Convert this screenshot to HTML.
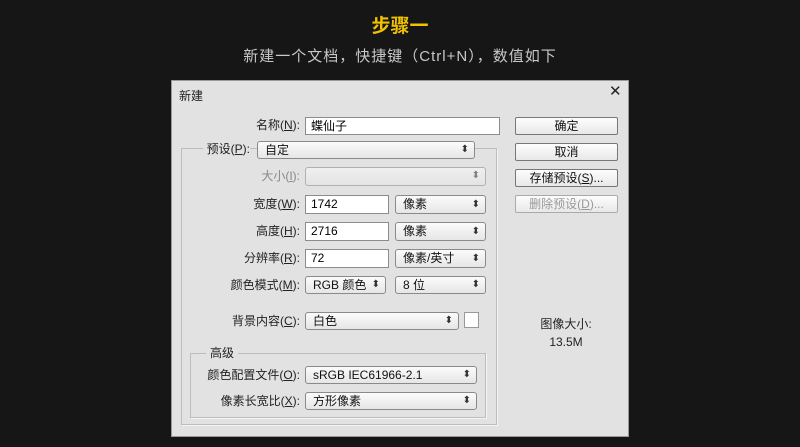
<!DOCTYPE html>
<html><head><meta charset="utf-8"><style>
*{margin:0;padding:0;box-sizing:border-box}
body{width:800px;height:447px;overflow:hidden;background:#161616;position:relative;font-family:"Liberation Sans","Noto Sans CJK SC",sans-serif;}
.a{position:absolute}
.t{font-size:12px;color:#222;white-space:nowrap}
.lbl{position:absolute;font-size:12px;color:#222;text-align:right;white-space:nowrap;margin-top:-2px}
.in{position:absolute;background:#fff;border:1px solid #8c8c8c;font-size:12px;color:#000;padding-left:5px;line-height:16px}
.sel{position:absolute;background:linear-gradient(#fbfbfb,#e6e6e6);border:1px solid #8a8a8a;border-radius:3px;font-size:12px;color:#111;padding-left:7px;line-height:16px}
.sel:after{content:"⬍";position:absolute;right:5px;top:0;font-size:10px;color:#333}
.btn{position:absolute;left:515px;width:103px;height:18px;background:linear-gradient(#fdfdfd,#e8e8e8);border:1px solid #777;border-radius:2px;font-size:12px;text-align:center;line-height:16px;color:#111}
u{text-decoration:underline}
</style></head><body>
<div class="a" style="left:0;top:11px;width:800px;text-align:center;font-size:19px;font-weight:bold;color:#f2c200">步骤一</div>
<div class="a" style="left:0;top:45px;width:800px;text-align:center;font-size:15px;color:#c8c8c8;letter-spacing:1px">新建一个文档，快捷键（Ctrl+N），数值如下</div>
<div class="a" style="left:171px;top:80px;width:458px;height:357px;background:#e2e2e2;border:1px solid #999"></div>
<div class="a t" style="left:179px;top:87px">新建</div>
<div class="a" style="left:609px;top:82px;font-size:15px;color:#222">✕</div>

<div class="a" style="left:181px;top:148px;width:316px;height:277px;border:1px solid #bdbdbd;box-shadow:1px 1px 0 #f5f5f5"></div>
<div class="a" style="left:190px;top:353px;width:296px;height:65px;border:1px solid #bdbdbd;box-shadow:1px 1px 0 #f5f5f5"></div>
<div class="a t" style="left:206px;top:344px;background:#e2e2e2;padding:0 4px">高级</div>

<div class="lbl" style="right:500px;top:118px">名称(<u>N</u>):</div>
<div class="in" style="left:305px;top:117px;width:195px;height:18px">蝶仙子</div>
<div class="lbl" style="right:550px;top:142px;background:#e2e2e2;padding-left:4px">预设(<u>P</u>):</div>
<div class="sel" style="left:257px;top:141px;width:218px;height:18px">自定</div>

<div class="lbl" style="right:500px;top:169px;color:#888">大小(<u>I</u>):</div>
<div class="sel" style="left:305px;top:167px;width:181px;height:19px;opacity:.55"></div>

<div class="lbl" style="right:500px;top:197px">宽度(<u>W</u>):</div>
<div class="in" style="left:305px;top:195px;width:84px;height:19px;line-height:17px">1742</div>
<div class="sel" style="left:395px;top:195px;width:91px;height:19px;line-height:17px">像素</div>
<div class="lbl" style="right:500px;top:224px">高度(<u>H</u>):</div>
<div class="in" style="left:305px;top:222px;width:84px;height:19px;line-height:17px">2716</div>
<div class="sel" style="left:395px;top:222px;width:91px;height:19px;line-height:17px">像素</div>
<div class="lbl" style="right:500px;top:251px">分辨率(<u>R</u>):</div>
<div class="in" style="left:305px;top:249px;width:84px;height:19px;line-height:17px">72</div>
<div class="sel" style="left:395px;top:249px;width:91px;height:19px;line-height:17px">像素/英寸</div>
<div class="lbl" style="right:500px;top:278px">颜色模式(<u>M</u>):</div>
<div class="sel" style="left:305px;top:276px;width:81px;height:18px">RGB 颜色</div>
<div class="sel" style="left:395px;top:276px;width:91px;height:18px">8 位</div>

<div class="lbl" style="right:500px;top:314px">背景内容(<u>C</u>):</div>
<div class="sel" style="left:305px;top:312px;width:154px;height:18px">白色</div>
<div class="a" style="left:464px;top:312px;width:15px;height:16px;background:#fff;border:1px solid #999"></div>

<div class="lbl" style="right:500px;top:368px">颜色配置文件(<u>O</u>):</div>
<div class="sel" style="left:305px;top:366px;width:172px;height:18px">sRGB IEC61966-2.1</div>
<div class="lbl" style="right:500px;top:394px">像素长宽比(<u>X</u>):</div>
<div class="sel" style="left:305px;top:392px;width:172px;height:18px">方形像素</div>

<div class="btn" style="top:117px">确定</div>
<div class="btn" style="top:143px">取消</div>
<div class="btn" style="top:169px">存储预设(<u>S</u>)...</div>
<div class="btn" style="top:195px;color:#999;border-color:#aaa">删除预设(<u>D</u>)...</div>

<div class="a t" style="left:516px;top:315px;width:100px;text-align:center">图像大小:</div>
<div class="a t" style="left:516px;top:335px;width:100px;text-align:center">13.5M</div>
</body></html>
